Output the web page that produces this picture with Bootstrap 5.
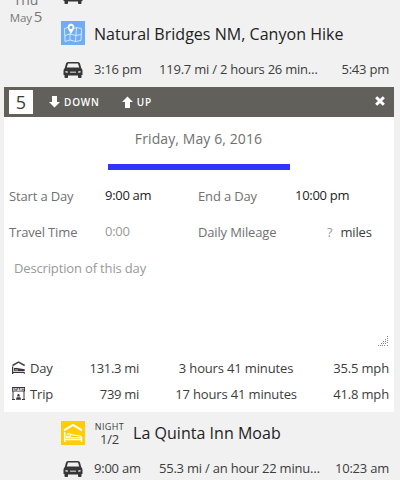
<!DOCTYPE html>
<html lang="en">
<head>
<meta charset="utf-8">
<meta name="viewport" content="width=device-width, initial-scale=1">
<title>Trip planner</title>
<link href="https://cdn.jsdelivr.net/npm/bootstrap@5.3.0/dist/css/bootstrap.min.css" rel="stylesheet">
<style>
body{width:400px;height:480px;background:#f1f1f1;color:#3c3c3c;font:13px/18px "Open Sans",sans-serif;letter-spacing:-.15px}
svg{display:block;flex:none}
.stops-top{height:87px}
.day-label{width:61px;padding-right:9px;color:#777;font-size:14px;line-height:17px;margin-top:-9px;letter-spacing:0}
.day-label .month{font-size:11.5px}
.day-label .num{font-size:15px;margin-left:-2px}
.legs{width:339px}
.prev-leg{height:4px}
.prev-leg svg{margin-left:2px}
.stop{height:26px;margin-top:16px}
.stop-name{font-size:16px;line-height:24px;color:#222;letter-spacing:.03px}
.stop .stop-name{margin-left:9px;padding-top:1px}
.leg{display:grid;grid-template-columns:33px 65px 164px 1fr;height:18px;margin:14px 11px 0 0;letter-spacing:-.22px}
.leg svg{margin:2px 0 0 2px}
.panel{width:390px;height:325px;margin-left:4px}
.bar{height:30px;background:#61605b;color:#fff;font-size:10px;letter-spacing:.8px;padding:0 9px 0 5px;font-weight:600}
.bar-num{width:24px;height:24px;font-size:18px;line-height:24px;letter-spacing:0;font-weight:400;color:#3c3c3c}
.bar .up{margin-left:22px}
.bar .close-icon{margin-bottom:2px}
.date{height:49px;padding-top:13px;padding-right:1px;font-size:14px;color:#707070;letter-spacing:.1px}
.accent{width:182px;height:6px;background:#33f;margin:-2px 0 17px 104px}
.fields{display:grid;grid-template-columns:96px 93px 97px 1fr;height:36px;padding-left:5px;color:#707070}
.fields .val{color:#222;line-height:16px;letter-spacing:-.3px}
.fields .val.hint,.fields .hint,.notes{color:#999}
.fields .unit{color:#3c3c3c}
.notes{height:97px;margin-top:-1px;padding:1px 5px 8px 10px}
.totals{display:grid;grid-template-columns:26px 34px 75px 160px 1fr;height:26px;padding-right:5px}
.totals svg{margin-left:8px}
.totals svg text{letter-spacing:0}
.totals .duration{padding-left:34px}
.totals .distance{letter-spacing:-.3px}
.night{width:31px;margin-left:9px;font-size:13px;line-height:12px}
.night small{display:block;font-size:9px;line-height:13px;letter-spacing:.4px}
</style>
<script src="https://cdn.jsdelivr.net/npm/bootstrap@5.3.0/dist/js/bootstrap.bundle.min.js"></script>
</head>
<body class="overflow-hidden text-nowrap">
<svg width="0" height="0" class="position-absolute">
<symbol id="car" viewBox="0 0 20 16"><path fill="#363636" fill-rule="evenodd" d="M5 0H15Q16.500 0 17 1.500L18.200 6Q19.500 7 19.500 9V13H18.500V15.200Q18.500 16 17.500 16H16Q15 16 15 15.200V13.500H5V15.200Q5 16 4 16H2.500Q1.500 16 1.500 15.200V13H.5V9Q.5 7 1.800 6L3 1.500Q3.500 0 5 0ZM5 1.500L3.800 5.500H16.200L15 1.500ZM2.500 9V10.500L4.800 10.800V9.500ZM17.500 9V10.500L15.200 10.800V9.500Z"/><path fill="#aaa" d="M7 9.500H13V11H7Z"/></symbol>
</svg>

<section class="stops-top d-flex overflow-hidden">
  <div class="day-label text-center">Thu<br><span class="month">May</span> <span class="num">5</span></div>
  <div class="legs">
    <div class="prev-leg d-flex align-items-end"><svg width="20" height="16"><use href="#car"/></svg></div>
    <div class="stop d-flex align-items-center">
      <svg width="24" height="24" viewBox="0 0 24 24"><path fill="#6eacf4" d="M0 0H24V24H0Z"/><g fill="none" stroke="#dcecff" stroke-width=".9"><path d="M7 6.500L3.500 7.500L4 20.500L9 19L14.500 20.500L20 19.500L20.500 7.500L15.500 6.500L13 7.500M9 12V19M15.500 6.500L14.500 20.500M4 14.500L9 13L15 14.500L20 13.500"/></g><path fill="#fff" fill-rule="evenodd" d="M10 13L7.300 8.500C5.700 5.500 7.300 2.800 10 2.800S14.300 5.500 12.700 8.500ZM10 4.800A1.600 1.600 0 1 0 10 8A1.600 1.600 0 1 0 10 4.800Z"/></svg>
      <span class="stop-name">Natural Bridges NM, Canyon Hike</span>
    </div>
    <div class="leg"><svg width="20" height="16"><use href="#car"/></svg><span>3:16 pm</span><span class="text-truncate">119.7 mi / 2 hours 26 min…</span><span class="text-end">5:43 pm</span></div>
  </div>
</section>

<main class="panel bg-white">
  <header class="bar d-flex align-items-center">
    <span class="bar-num bg-white text-center">5</span>
    <svg class="ms-3" width="11" height="12" viewBox="0 0 11 12"><path fill="#fff" d="M3 0H8V6H11L5.500 11.500L0 6H3Z"/></svg><span class="ms-1">DOWN</span>
    <svg class="up" width="11" height="12" viewBox="0 0 11 12"><path fill="#fff" d="M3 12H8V6H11L5.500 .5L0 6H3Z"/></svg><span class="ms-1">UP</span>
    <svg class="close-icon ms-auto" width="10" height="10" viewBox="0 0 10 10"><path d="M1.200 1.200L8.800 8.800M8.800 1.200L1.200 8.800" stroke="#fff" stroke-width="3"/></svg>
  </header>
  <div class="date text-center">Friday, May 6, 2016</div>
  <div class="accent"></div>
  <div class="fields"><span>Start a Day</span><span class="val">9:00 am</span><span>End a Day</span><span class="val">10:00 pm</span></div>
  <div class="fields"><span>Travel Time</span><span class="val hint">0:00</span><span>Daily Mileage</span><span class="d-flex"><span class="hint ms-4 ps-2">?</span><span class="unit ms-2">miles</span></span></div>
  <div class="notes d-flex justify-content-between"><span>Description of this day</span>
    <svg class="align-self-end" width="11" height="11" viewBox="0 0 11 11"><path fill="#888" d="M9 0h1v1H9zM9 2h1v1H9zM7 3h1v1H7zM9 4h1v1H9zM5 5h1v1H5zM7 5h1v1H7zM9 6h1v1H9zM3 7h1v1H3zM5 7h1v1H5zM7 7h1v1H7zM0 9h1v1H0zM2 9h1v1H2zM4 9h1v1H4zM6 9h1v1H6zM9 9h1v1H9z"/></svg></div>
  <div class="totals align-items-center"><svg width="14" height="14" viewBox="0 0 14 14"><path d="M.5 4.500L6.500 1.200L12.700 4.500" fill="none" stroke="#444" stroke-width="1.500"/><path fill="#39343c" d="M0 5.500H1.300V11H12.700V13H11.800V12H1.300V13H0ZM2 7H5L12.700 8.300V10.300H2Z"/><path d="M2.500 9H6" stroke="#fff" stroke-width=".7"/></svg><span>Day</span><span class="distance text-end">131.3 mi</span><span class="duration text-center">3 hours 41 minutes</span><span class="text-end">35.5 mph</span></div>
  <div class="totals align-items-center"><svg width="14" height="14" viewBox="0 0 14 14"><path fill="#39343c" d="M0 0H13V4.500H0ZM.5 4.500H1.500V12H.5ZM11.500 4.500H12.500V12H11.500ZM0 12H3V13H0ZM10 12H13V13H10ZM5.800 7H7.200L8 9.500H5ZM4.700 10.200H8.300L9.200 12.700H3.800Z"/><text x=".8" y="3.700" textLength="11.500" lengthAdjust="spacingAndGlyphs" font-size="4" font-weight="bold" fill="#fff">START</text></svg><span>Trip</span><span class="distance text-end">739 mi</span><span class="duration text-center">17 hours 41 minutes</span><span class="text-end">41.8 mph</span></div>
</main>

<section class="legs ms-auto">
  <div class="d-flex align-items-center pt-2">
    <svg width="24" height="24" viewBox="0 0 24 24"><path fill="#ffcd05" d="M0 0H24V24H0Z"/><g fill="none" stroke="#fff"><path d="M3 9.300L12 4L21 9.300" stroke-width="2"/><path d="M3.700 11V21M3.700 18.500H20.500M20.500 16V21" stroke-width="1.500"/><path d="M5.500 13H9.500V15.500M9.500 13.500L20 15.300V16.800H5.500V15.300H9" stroke-width="1.100"/></g></svg>
    <div class="night text-center"><small>NIGHT</small>1/2</div>
    <span class="stop-name ms-2">La Quinta Inn Moab</span>
  </div>
  <div class="leg"><svg width="20" height="16"><use href="#car"/></svg><span>9:00 am</span><span class="text-truncate">55.3 mi / an hour 22 minu…</span><span class="text-end">10:23 am</span></div>
</section>
</body>
</html>
